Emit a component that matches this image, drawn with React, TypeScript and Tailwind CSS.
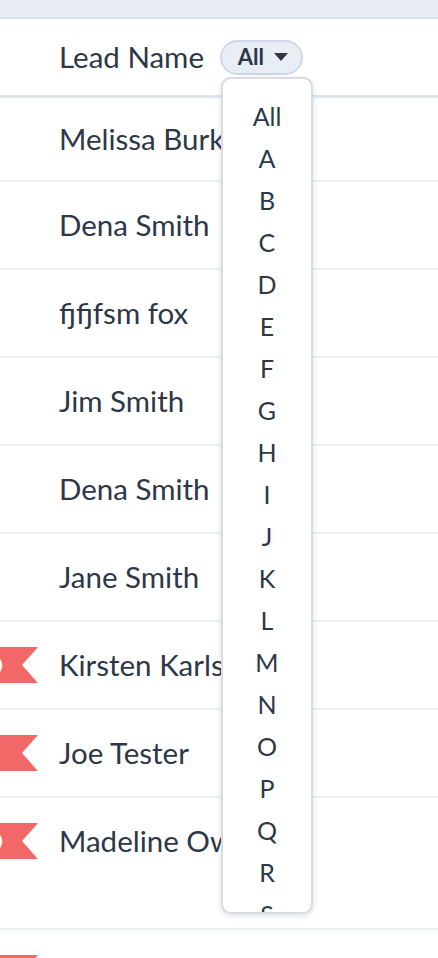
import React from "react";

const letters = ["All", ..."ABCDEFGHIJKLMNOPQRSTUVWXYZ".split("")];

type Lead = { name: string; flag?: boolean; tag?: string; extra?: boolean };

const leads: Lead[] = [
  { name: "Melissa Burke" },
  { name: "Dena Smith" },
  { name: "fjfjfsm fox" },
  { name: "Jim Smith" },
  { name: "Dena Smith" },
  { name: "Jane Smith" },
  { name: "Kirsten Karlsson", flag: true, tag: "0" },
  { name: "Joe Tester", flag: true },
  { name: "Madeline Owens", flag: true, tag: "0", extra: true },
  { name: "Kevin Hall", flag: true },
];

function Flag({ tag }: { tag?: string }) {
  return (
    <div className="flex h-[36px] w-[38px] items-center bg-[#f26868] [clip-path:polygon(0_0,100%_0,58%_50%,100%_100%,0_100%)]">
      {tag && (
        <span className="-ml-[10px] text-[22px] leading-none font-medium text-white">
          {tag}
        </span>
      )}
    </div>
  );
}

export default function App() {
  return (
    <div className="relative h-[958px] w-full overflow-hidden bg-white font-['Lato','Noto_Sans',sans-serif] text-[#2d3748]">
      <div className="h-[19px] border-b-2 border-[#d9e2ec] bg-[#e9edf3]" />

      <div className="flex h-[79px] items-center border-b-[3px] border-[#dde5ee] pl-[59px]">
        <span className="text-[29.5px]">Lead Name</span>
        <div className="relative ml-[16px]">
          <button className="flex h-[35px] w-[83px] items-center justify-center gap-[10px] rounded-full border-2 border-[#cfd9e6] bg-[#e9eef6] pl-[3px]">
            <span className="text-[22px] font-bold leading-none">All</span>
            <svg width="14" height="8" viewBox="0 0 14 8">
              <path d="M0 0 L14 0 L7 8 Z" fill="#2d3748" />
            </svg>
          </button>
          <div className="absolute top-[37px] left-[1px] z-10 h-[837px] w-[92px] overflow-hidden rounded-[10px] border-2 border-[#d8dbdf] bg-white pt-[16px] shadow-[0_2px_6px_rgba(0,0,0,0.12)]">
            {letters.map((l) => (
              <div key={l} className="h-[42px] text-center text-[25px] leading-[42px]">
                {l}
              </div>
            ))}
          </div>
        </div>
      </div>

      {leads.map((lead, i) => (
        <div key={i} className="border-b-2 border-[#edf0f4]">
          <div className={`flex items-center ${i === 0 ? "h-[82px]" : "h-[86px]"}`}>
            <div className="w-[59px] shrink-0">{lead.flag && <Flag tag={lead.tag} />}</div>
            <span className="text-[29.5px] whitespace-nowrap">{lead.name}</span>
          </div>
          {lead.extra && <div className="h-[44px]" />}
        </div>
      ))}
    </div>
  );
}
